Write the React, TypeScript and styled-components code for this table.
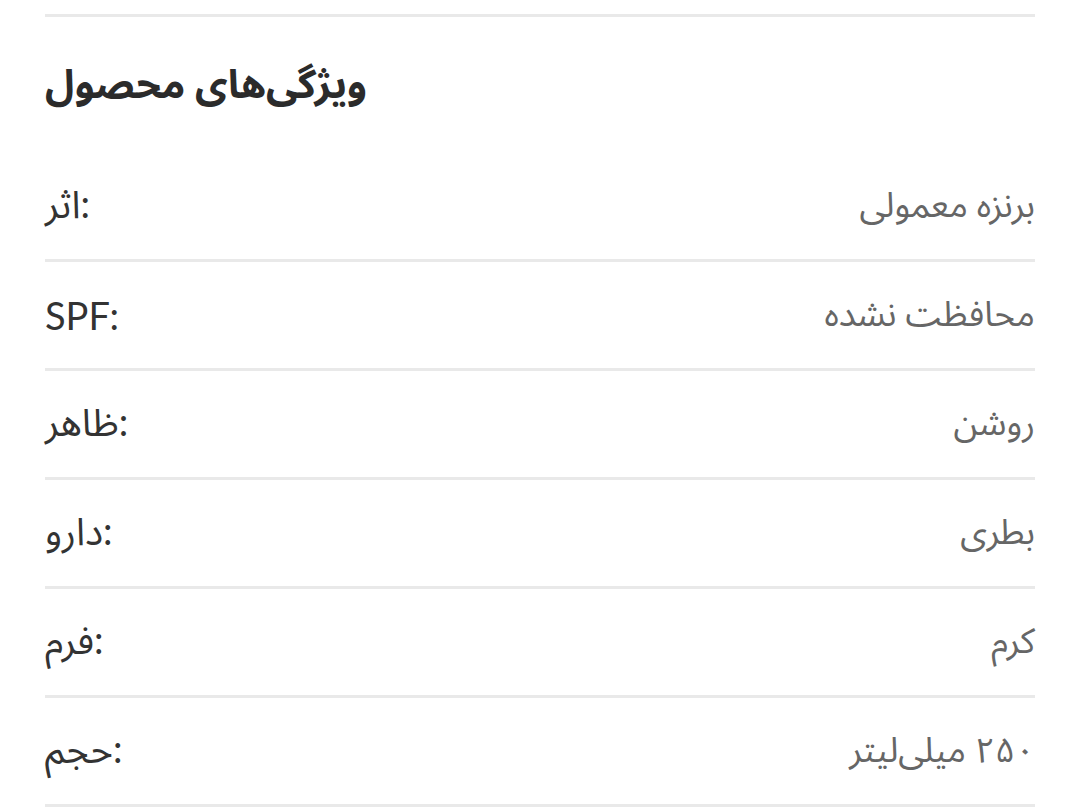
import React from "react";
import styled, { createGlobalStyle } from "styled-components";

const GlobalStyle = createGlobalStyle`
  html, body { margin: 0; padding: 0; background: #ffffff; }
  body { font-family: "Lato", "Noto Sans Arabic", "DejaVu Sans", sans-serif; }
`;

const Page = styled.div`
  padding: 14px 45px 0 45px;
`;

const Section = styled.section`
  border-top: 3px solid #e9e9e9;
`;

const Title = styled.h2`
  margin: 0;
  padding: 38px 0 42px 0;
  font-size: 40px;
  font-weight: 700;
  color: #2b2b2b;
  direction: rtl;
  text-align: left;
  line-height: 56px;
`;

const List = styled.div`
  display: flex;
  flex-direction: column;
`;

const Row = styled.div`
  display: flex;
  justify-content: space-between;
  align-items: center;
  height: 106px;
  border-bottom: 3px solid #e9e9e9;
`;

const Label = styled.span`
  direction: ltr;
  font-size: 38px;
  color: #333333;
`;

const Value = styled.span`
  direction: rtl;
  font-size: 35px;
  color: #666666;
`;

const rows: { label: string; value: string }[] = [
  { label: "اثر:", value: "برنزه معمولی" },
  { label: "SPF:", value: "محافظت نشده" },
  { label: "ظاهر:", value: "روشن" },
  { label: "دارو:", value: "بطری" },
  { label: "فرم:", value: "کرم" },
  { label: "حجم:", value: "۲۵۰ میلی‌لیتر" },
];

export default function App() {
  return (
    <>
      <GlobalStyle />
      <Page>
        <Section>
          <Title>ویژگی‌های محصول</Title>
          <List>
            {rows.map((r) => (
              <Row key={r.label}>
                <Label>{r.label}</Label>
                <Value>{r.value}</Value>
              </Row>
            ))}
          </List>
        </Section>
      </Page>
    </>
  );
}
